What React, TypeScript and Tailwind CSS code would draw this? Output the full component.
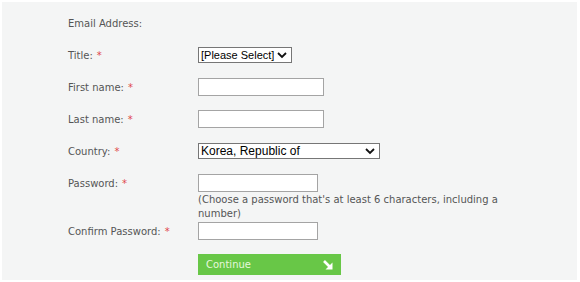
import React from "react";

const Star = () => <span className="text-[#e0474c] ml-[4px]">*</span>;

const Chevron = () => (
  <svg width="10" height="7" viewBox="0 0 10 7" className="absolute right-[4px] top-[4px]">
    <path d="M1 1 L5 5 L9 1" stroke="#111" strokeWidth="1.8" fill="none" />
  </svg>
);

const FakeSelect = ({ value, width, size }: { value: string; width: string; size: string }) => (
  <div className={`relative h-[16px] ${width} ${size} bg-white border border-[#767676] leading-[14px] text-black pl-[2px] whitespace-nowrap overflow-hidden font-['Liberation_Sans',Arial,sans-serif]`}>
    {value}
    <Chevron />
  </div>
);

const TextBox = ({ width }: { width: string }) => (
  <input className={`block h-[18px] ${width} bg-white border border-[#a4a4a4] outline-none`} />
);

const Row = ({ label, required, children }: { label: string; required?: boolean; children?: React.ReactNode }) => (
  <div className="flex items-center h-8">
    <div className="w-[130px] shrink-0">
      {label}
      {required && <Star />}
    </div>
    {children}
  </div>
);

export default function App() {
  return (
    <div className="w-[580px] h-[282px] bg-white pt-[2px] pl-[2px]">
      <div className="w-[575px] h-[278px] bg-[#f4f5f5] pl-[66px] pt-[5px] text-[10px] text-[#555] font-['DejaVu_Sans',Verdana,sans-serif]">
        <Row label="Email Address:" />
        <Row label="Title:" required>
          <FakeSelect value="[Please Select]" width="w-[94px]" size="text-[11px]" />
        </Row>
        <Row label="First name:" required>
          <TextBox width="w-[126px]" />
        </Row>
        <Row label="Last name:" required>
          <TextBox width="w-[126px]" />
        </Row>
        <Row label="Country:" required>
          <FakeSelect value="Korea, Republic of" width="w-[182px]" size="text-[12px]" />
        </Row>
        <div className="flex">
          <div className="w-[130px] shrink-0 h-8 flex items-center">
            Password:
            <Star />
          </div>
          <div className="pt-[7px] w-[310px]">
            <TextBox width="w-[120px]" />
            <p className="leading-[14px] mt-[1px]">
              (Choose a password that's at least 6 characters, including a number)
            </p>
          </div>
        </div>
        <div className="flex items-center mt-[1px]">
          <div className="w-[130px] shrink-0">
            Confirm Password:
            <Star />
          </div>
          <TextBox width="w-[120px]" />
        </div>
        <div className="pl-[130px] mt-[14px]">
          <button className="flex items-center justify-between w-[143px] h-[21px] bg-[#68c747] pl-[8px] pr-[7px] text-[#e6f7dc] text-[10px]">
            Continue
            <svg width="12" height="12" viewBox="0 0 12 12">
              <path d="M2 2 L9 9" stroke="#fff" strokeWidth="2.6" />
              <path d="M3.5 10.5 H10.5 V3.5 Z" fill="#fff" />
            </svg>
          </button>
        </div>
      </div>
    </div>
  );
}
